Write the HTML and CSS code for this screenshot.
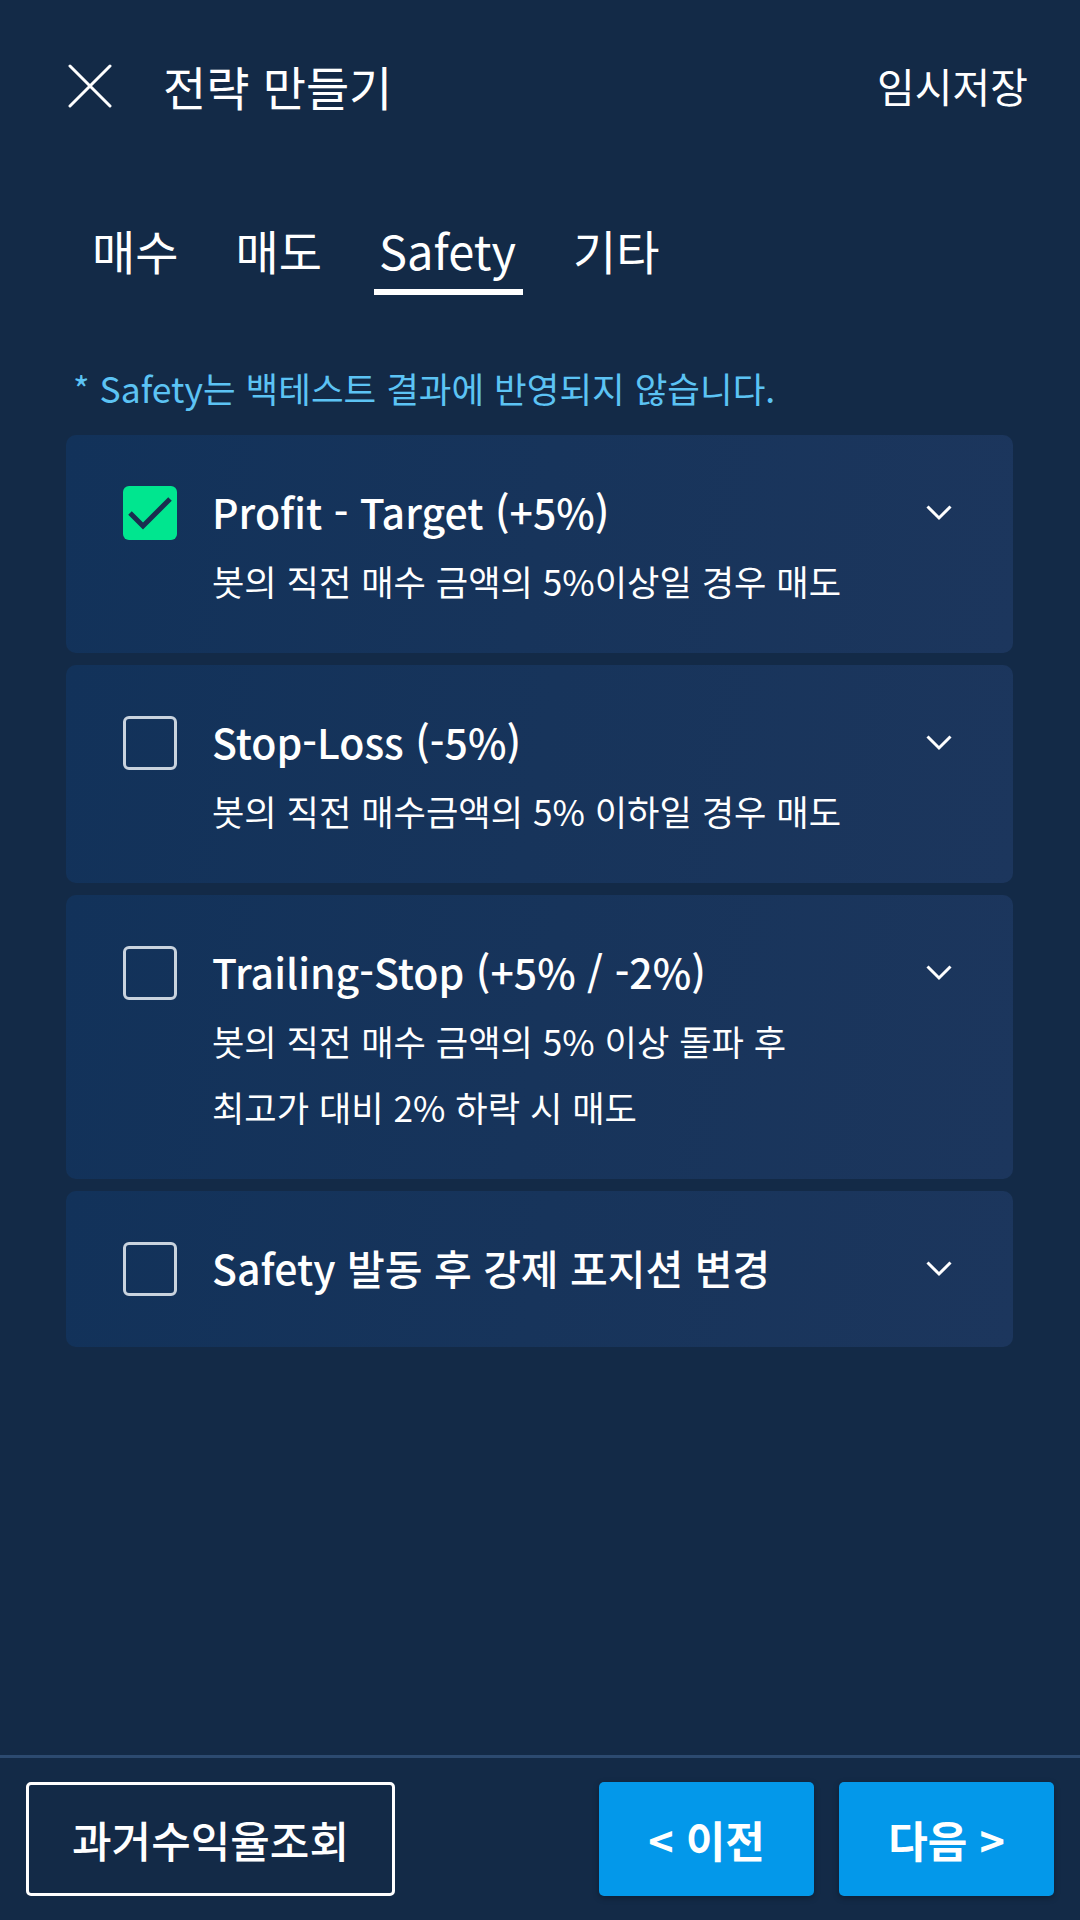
FILE: index.html
```html
<!DOCTYPE html>
<html lang="ko">
<head>
<meta charset="utf-8">
<title>전략 만들기</title>
<link rel="stylesheet" href="styles.css">
</head>
<body>
<div class="page">
  <header class="header">
    <div class="header-left">
      <svg class="close" width="44" height="44" viewBox="0 0 44 44"><path d="M2 2 L42 42 M42 2 L2 42" stroke="#fff" stroke-width="3" fill="none" stroke-linecap="round"/></svg>
      <h1 class="header-title">전략 만들기</h1>
    </div>
    <div class="header-action">임시저장</div>
  </header>

  <nav class="tabs">
    <div class="tab">매수</div>
    <div class="tab">매도</div>
    <div class="tab tab-active">Safety</div>
    <div class="tab">기타</div>
  </nav>

  <p class="notice">* Safety는 백테스트 결과에 반영되지 않습니다.</p>

  <div class="cards">
    <div class="card">
      <span class="cb cb-checked"><svg width="54" height="54" viewBox="0 0 54 54"><path d="M7 27 L20 40 L47 13" stroke="#1a2e4f" stroke-width="5" fill="none"/></svg></span>
      <div class="card-title">Profit - Target (+5%)</div>
      <svg class="chev" width="26" height="16" viewBox="0 0 26 16"><path d="M1.5 1.5 L13 13 L24.5 1.5" stroke="#fff" stroke-width="3" fill="none"/></svg>
      <div class="card-desc">봇의 직전 매수 금액의 5%이상일 경우 매도</div>
    </div>
    <div class="card">
      <span class="cb"></span>
      <div class="card-title">Stop-Loss (-5%)</div>
      <svg class="chev" width="26" height="16" viewBox="0 0 26 16"><path d="M1.5 1.5 L13 13 L24.5 1.5" stroke="#fff" stroke-width="3" fill="none"/></svg>
      <div class="card-desc">봇의 직전 매수금액의 5% 이하일 경우 매도</div>
    </div>
    <div class="card">
      <span class="cb"></span>
      <div class="card-title">Trailing-Stop (+5% / -2%)</div>
      <svg class="chev" width="26" height="16" viewBox="0 0 26 16"><path d="M1.5 1.5 L13 13 L24.5 1.5" stroke="#fff" stroke-width="3" fill="none"/></svg>
      <div class="card-desc">봇의 직전 매수 금액의 5% 이상 돌파 후<br>최고가 대비 2% 하락 시 매도</div>
    </div>
    <div class="card card-plain">
      <span class="cb"></span>
      <div class="card-title">Safety 발동 후 강제 포지션 변경</div>
      <svg class="chev" width="26" height="16" viewBox="0 0 26 16"><path d="M1.5 1.5 L13 13 L24.5 1.5" stroke="#fff" stroke-width="3" fill="none"/></svg>
    </div>
  </div>

  <footer class="footer">
    <button class="btn btn-outline">과거수익율조회</button>
    <div class="nav-btns">
      <button class="btn btn-primary">&lt; 이전</button>
      <button class="btn btn-primary">다음 &gt;</button>
    </div>
  </footer>
</div>
</body>
</html>
```
FILE: styles.css
```css
* { box-sizing: border-box; }
html, body { margin: 0; padding: 0; }
body {
  background: #132a47;
  color: #fff;
  font-family: "Noto Sans CJK KR", "Noto Sans", sans-serif;
}
.page {
  width: 1080px;
  height: 1920px;
  display: flex;
  flex-direction: column;
}
.header {
  height: 172px;
  display: flex;
  align-items: center;
  justify-content: space-between;
  padding: 0 52px 0 68px;
}
.header-left {
  display: flex;
  align-items: center;
  gap: 51px;
}
.close { display: block; }
.header-title {
  margin: 0;
  font-size: 47px;
  font-weight: 400;
  line-height: 1.3;
}
.header-action {
  font-size: 41px;
  line-height: 1.3;
}
.tabs {
  display: flex;
  gap: 45px;
  margin-top: 48px;
  padding-left: 87px;
}
.tab {
  font-size: 47px;
  line-height: 60px;
  padding: 0 7px 9px 5px;
  border-bottom: 6px solid transparent;
}
.tab-active { border-bottom-color: #fff; }
.notice {
  margin: 69px 0 23px 73px;
  font-size: 35.5px;
  line-height: 48px;
  color: #5cc3f4;
}
.cards {
  display: flex;
  flex-direction: column;
  gap: 12px;
  padding: 0 67px 0 66px;
}
.card {
  display: grid;
  grid-template-columns: 54px 1fr 26px;
  grid-template-rows: 54px auto;
  column-gap: 35px;
  align-items: center;
  padding: 51px 61px 39px 57px;
  border-radius: 10px;
  background: linear-gradient(100deg, #12325a 0%, #17345b 50%, #1c365d 100%);
}
.card-plain { padding-bottom: 51px; }
.cb {
  width: 54px;
  height: 54px;
  border: 3px solid #c9d3de;
  border-radius: 6px;
  display: block;
}
.cb-checked {
  border: none;
  background: #00e68f;
}
.cb-checked svg { display: block; }
.card-title {
  font-size: 41px;
  font-weight: 500;
  line-height: 54px;
  padding-bottom: 4px;
  white-space: nowrap;
}
.chev { display: block; }
.card-desc {
  grid-column: 2 / 4;
  margin-top: 8px;
  font-size: 35.2px;
  line-height: 66px;
  white-space: nowrap;
}
.footer {
  margin-top: auto;
  border-top: 3px solid #2c4a70;
  padding: 24px 26px 24px;
  display: flex;
  justify-content: space-between;
  align-items: center;
}
.btn {
  font-family: inherit;
  color: #fff;
  height: 114px;
  font-size: 43px;
  cursor: pointer;
}
.btn-outline {
  width: 369px;
  font-weight: 500;
  background: transparent;
  border: 3px solid #fff;
  border-radius: 5px;
}
.nav-btns {
  display: flex;
  gap: 25px;
}
.btn-primary {
  width: 215px;
  font-weight: 700;
  border: none;
  border-radius: 5px;
  background: #0398ea;
  box-shadow: 0 2px 6px rgba(0,0,0,0.3);
}
```
